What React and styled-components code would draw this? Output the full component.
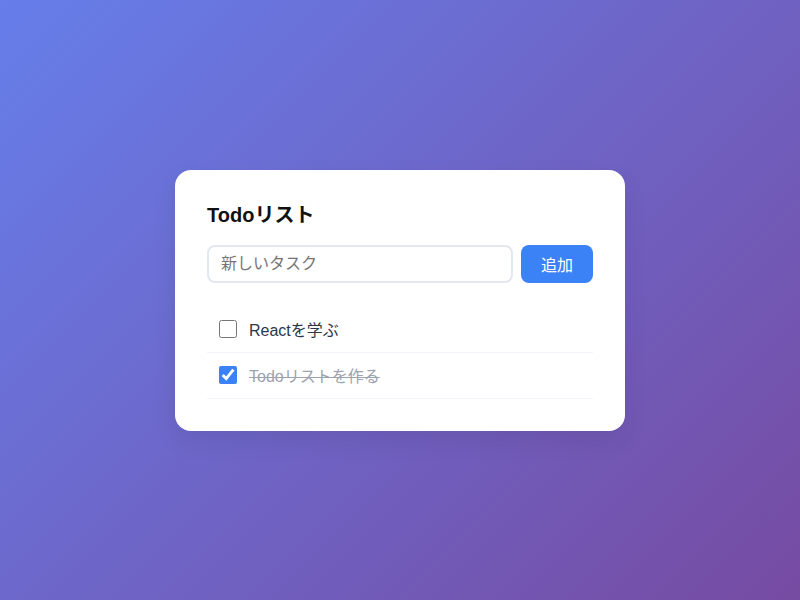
import React, { useState } from 'react';
import styled, { createGlobalStyle } from 'styled-components';

const GlobalStyle = createGlobalStyle`
  html, body {
    margin: 0;
    padding: 0;
    height: 100%;
  }
  body {
    font-family: "Liberation Sans", "Noto Sans CJK JP", sans-serif;
  }
  #root {
    height: 100%;
  }
`;

const Page = styled.div`
  min-height: 100vh;
  display: flex;
  align-items: center;
  justify-content: center;
  background: linear-gradient(135deg, #667eea 0%, #764ba2 100%);
`;

const Card = styled.div`
  width: 450px;
  box-sizing: border-box;
  padding: 32px;
  background: #fff;
  border-radius: 16px;
  box-shadow: 0 10px 25px rgba(0, 0, 0, 0.08);
`;

const Title = styled.h2`
  margin: 0 0 16px;
  font-size: 20px;
  line-height: 27px;
  font-weight: 700;
  color: #111;
`;

const Form = styled.form`
  display: flex;
  gap: 8px;
`;

const Input = styled.input`
  flex: 1;
  min-width: 0;
  height: 38px;
  box-sizing: border-box;
  padding: 0 12px;
  border: 2px solid #e2e8f0;
  border-radius: 8px;
  font-family: inherit;
  font-size: 16px;
  color: #1f2937;
  outline: none;
  &::placeholder {
    color: #757575;
  }
`;

const AddButton = styled.button`
  width: 72px;
  height: 38px;
  border: none;
  border-radius: 8px;
  background: #3b82f6;
  color: #fff;
  font-family: inherit;
  font-size: 16px;
  cursor: pointer;
`;

const List = styled.ul`
  list-style: none;
  margin: 24px 0 0;
  padding: 0;
`;

const Item = styled.li`
  display: flex;
  align-items: center;
  gap: 12px;
  height: 46px;
  box-sizing: border-box;
  padding: 0 12px 1px;
  border-bottom: 1px solid #f1f5f9;
`;

const Check = styled.input`
  width: 18px;
  height: 18px;
  margin: 0;
  accent-color: #3b82f6;
`;

const Label = styled.span`
  font-size: 16px;
  color: ${p => (p.$done ? '#9ca3af' : '#2d3748')};
  text-decoration: ${p => (p.$done ? 'line-through' : 'none')};
`;

export default function App() {
  const [todos, setTodos] = useState([
    { id: 1, text: 'Reactを学ぶ', done: false },
    { id: 2, text: 'Todoリストを作る', done: true },
  ]);
  const [text, setText] = useState('');

  const add = e => {
    e.preventDefault();
    if (!text.trim()) return;
    setTodos([...todos, { id: Date.now(), text, done: false }]);
    setText('');
  };

  const toggle = id =>
    setTodos(todos.map(t => (t.id === id ? { ...t, done: !t.done } : t)));

  return (
    <Page>
      <GlobalStyle />
      <Card>
        <Title>Todoリスト</Title>
        <Form onSubmit={add}>
          <Input
            placeholder="新しいタスク"
            value={text}
            onChange={e => setText(e.target.value)}
          />
          <AddButton type="submit">追加</AddButton>
        </Form>
        <List>
          {todos.map(t => (
            <Item key={t.id}>
              <Check type="checkbox" checked={t.done} onChange={() => toggle(t.id)} />
              <Label $done={t.done}>{t.text}</Label>
            </Item>
          ))}
        </List>
      </Card>
    </Page>
  );
}
